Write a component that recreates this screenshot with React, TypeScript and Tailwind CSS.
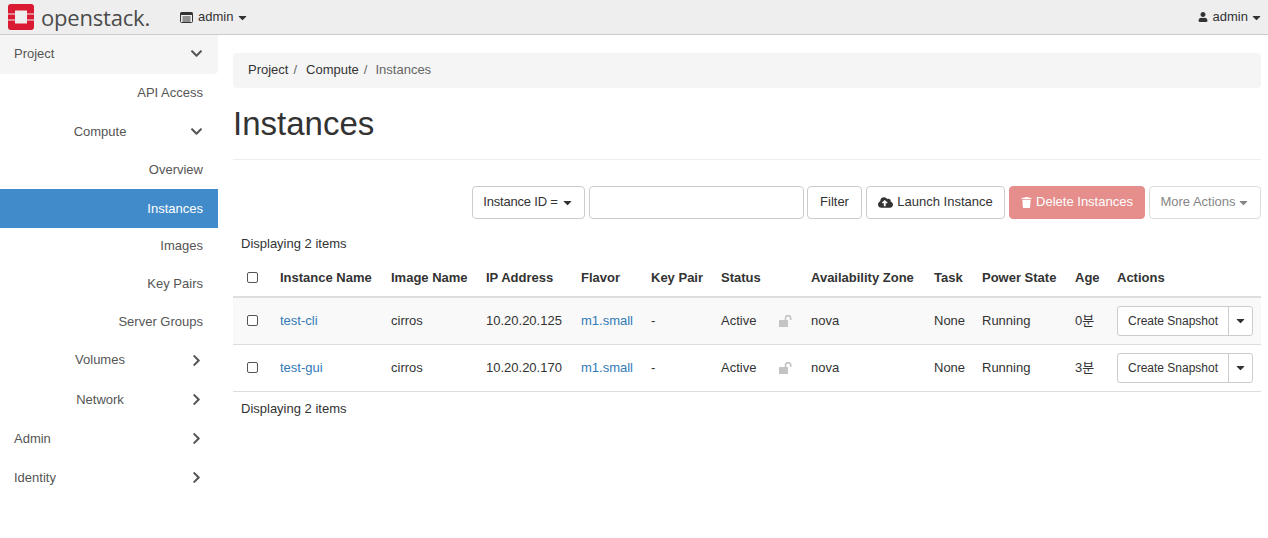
import React from "react";
import {
  FaCaretDown,
  FaChevronDown,
  FaChevronRight,
  FaCloudUploadAlt,
  FaTrash,
  FaUser,
} from "react-icons/fa";

const FONT = "font-['Liberation_Sans','Noto_Sans_CJK_KR',sans-serif]";

const Logo = () => (
  <svg width="26" height="26" viewBox="0 0 26 26" className="shrink-0">
    <path
      fill="#da1a32"
      d="M3 0h20a3 3 0 0 1 3 3v6.5h-7V6.5H7v3H0V3a3 3 0 0 1 3-3zM0 10.5h7v5H0zM19 10.5h7v5h-7zM0 16.5h7v3h12v-3h7V23a3 3 0 0 1-3 3H3a3 3 0 0 1-3-3z"
    />
  </svg>
);

const ListIcon = () => (
  <svg width="13" height="11" viewBox="0 0 13 11" className="shrink-0">
    <rect x="0.5" y="0.5" width="12" height="10" rx="1" fill="none" stroke="#333" />
    <rect x="0.5" y="0.5" width="12" height="2.5" fill="#333" />
    <path d="M2.5 5h8M2.5 7h8M2.5 9h8" stroke="#333" strokeWidth="1" />
  </svg>
);

const UnlockIcon = () => (
  <svg width="14" height="12" viewBox="0 0 14 12" className="shrink-0">
    <rect x="0" y="5" width="9" height="7" rx="0.5" fill="#c4c4c4" />
    <path d="M6.5 5.5V3.2a2.6 2.6 0 0 1 5.2 0V5" fill="none" stroke="#c4c4c4" strokeWidth="1.6" />
  </svg>
);

const SideRow = ({
  h,
  label,
  align = "right",
  open,
  hasArrow,
  active,
  band,
}: {
  h: string;
  label: string;
  align?: "left" | "center" | "right";
  open?: boolean;
  hasArrow?: boolean;
  active?: boolean;
  band?: boolean;
}) => (
  <div
    className={`flex items-center text-[13px] ${h} ${
      active ? "bg-[#428bca] text-white" : "pb-[2px] text-[#555]"
    } ${band ? "bg-[#f5f5f5] rounded-br-[4px]" : ""}`}
  >
    {align === "left" && <span className="pl-[14px] flex-1">{label}</span>}
    {align === "center" && <span className="w-[174px] pl-[26px] text-center">{label}</span>}
    {align === "right" && <span className="flex-1 text-right pr-[15px]">{label}</span>}
    {hasArrow && (
      <span className="ml-auto w-[44px] flex justify-center text-[#555]">
        {open ? <FaChevronDown size={13} /> : <FaChevronRight size={13} />}
      </span>
    )}
  </div>
);

const Sidebar = () => (
  <aside className="w-[218px] shrink-0">
    <SideRow h="h-[39px]" label="Project" align="left" hasArrow open band />
    <SideRow h="h-[39px]" label="API Access" />
    <SideRow h="h-[39px]" label="Compute" align="center" hasArrow open />
    <SideRow h="h-[37px]" label="Overview" />
    <SideRow h="h-[39px]" label="Instances" active />
    <SideRow h="h-[38px]" label="Images" />
    <SideRow h="h-[38px]" label="Key Pairs" />
    <SideRow h="h-[38px]" label="Server Groups" />
    <SideRow h="h-[38px]" label="Volumes" align="center" hasArrow />
    <SideRow h="h-[41px]" label="Network" align="center" hasArrow />
    <SideRow h="h-[37px]" label="Admin" align="left" hasArrow />
    <SideRow h="h-[41px]" label="Identity" align="left" hasArrow />
  </aside>
);

const btn =
  "h-[33px] flex items-center justify-center rounded-[4px] border pb-[1px] text-[13px] whitespace-nowrap";

const Toolbar = () => (
  <div className="mt-[26px] flex justify-end">
    <div className={`${btn} w-[113px] border-[#ccc] text-[#333] gap-[3px] tracking-[-0.2px]`}>
      Instance ID = <FaCaretDown size={13} />
    </div>
    <input className="ml-[4px] h-[33px] w-[215px] rounded-[4px] border border-[#ccc] bg-white" />
    <div className={`${btn} ml-[3px] w-[55px] border-[#ccc] text-[#333]`}>Filter</div>
    <div className={`${btn} ml-[4px] w-[139px] border-[#ccc] text-[#333] gap-[4px]`}>
      <FaCloudUploadAlt size={15} /> Launch Instance
    </div>
    <div className={`${btn} ml-[4px] w-[136px] border-[#e58e8c] bg-[#e58e8c] text-white gap-[4px]`}>
      <FaTrash size={11} /> Delete Instances
    </div>
    <div className={`${btn} ml-[4px] w-[112px] border-[#ddd] text-[#868686] gap-[1px]`}>
      More Actions <FaCaretDown size={13} />
    </div>
  </div>
);

const Check = () => (
  <input
    type="checkbox"
    className="appearance-none block w-[11px] h-[11px] mx-auto rounded-[2px] border border-[#555] bg-white"
  />
);

const HEAD = [
  "Instance Name",
  "Image Name",
  "IP Address",
  "Flavor",
  "Key Pair",
  "Status",
  "Availability Zone",
  "Task",
  "Power State",
  "Age",
  "Actions",
];

const ROWS = [
  { name: "test-cli", ip: "10.20.20.125", age: "0분", striped: true },
  { name: "test-gui", ip: "10.20.20.170", age: "3분", striped: false },
];

const InstanceTable = () => (
  <table className="w-[1028px] table-fixed border-collapse text-[13px] text-[#333]">
    <colgroup>
      <col className="w-[39px]" />
      <col className="w-[111px]" />
      <col className="w-[95px]" />
      <col className="w-[95px]" />
      <col className="w-[70px]" />
      <col className="w-[70px]" />
      <col className="w-[90px]" />
      <col className="w-[123px]" />
      <col className="w-[48px]" />
      <col className="w-[93px]" />
      <col className="w-[42px]" />
      <col className="w-[152px]" />
    </colgroup>
    <thead>
      <tr className="h-[38px] border-b-2 border-[#ddd]">
        <th className="p-0">
          <Check />
        </th>
        {HEAD.map((h) => (
          <th key={h} className="px-[8px] py-0 text-left font-bold whitespace-nowrap">
            {h}
          </th>
        ))}
      </tr>
    </thead>
    <tbody>
      {ROWS.map((r) => (
        <tr key={r.name} className={`h-[47px] border-b border-[#ddd] ${r.striped ? "bg-[#f9f9f9]" : ""}`}>
          <td className="p-0">
            <Check />
          </td>
          <td className="px-[8px] text-[#337ab7]">{r.name}</td>
          <td className="px-[8px]">cirros</td>
          <td className="px-[8px] whitespace-nowrap">{r.ip}</td>
          <td className="px-[8px] text-[#337ab7] whitespace-nowrap">m1.small</td>
          <td className="px-[8px]">-</td>
          <td className="pl-[8px]">
            <div className="flex items-center justify-between pr-[10px]">
              Active
              <UnlockIcon />
            </div>
          </td>
          <td className="px-[8px]">nova</td>
          <td className="px-[8px]">None</td>
          <td className="px-[8px]">Running</td>
          <td className="px-[8px] whitespace-nowrap">{r.age}</td>
          <td className="pl-[8px] pr-[8px]">
            <div className="flex h-[30px] w-[136px] rounded-[3px] border border-[#ccc] bg-white text-[12px]">
              <div className="flex flex-1 items-center justify-center whitespace-nowrap">
                Create Snapshot
              </div>
              <div className="flex w-[24px] items-center justify-center border-l border-[#ccc]">
                <FaCaretDown size={13} />
              </div>
            </div>
          </td>
        </tr>
      ))}
    </tbody>
  </table>
);

export default function App() {
  return (
    <div className={`h-[538px] w-[1268px] overflow-hidden bg-white ${FONT}`}>
      <header className="flex h-[35px] items-center border-b border-[#ccc] bg-[#eeeeee] text-[#333]">
        <div className="ml-[8px] flex w-[172px] items-center">
          <Logo />
          <span className="ml-[7px] text-[22px] leading-none font-medium tracking-[-0.2px] text-[#4b4b4b] font-['Open_Sans',sans-serif]">
            openstack.
          </span>
        </div>
        <div className="flex items-center text-[13px]">
          <ListIcon />
          <span className="ml-[5px]">admin</span>
          <FaCaretDown size={13} className="ml-[3px]" />
        </div>
        <div className="ml-auto mr-[5px] flex items-center text-[13px]">
          <FaUser size={10} />
          <span className="ml-[5px]">admin</span>
          <FaCaretDown size={13} className="ml-[2px]" />
        </div>
      </header>

      <div className="flex">
        <Sidebar />
        <main className="ml-[15px] w-[1028px] pt-[18px]">
          <nav className="flex h-[35px] items-center rounded-[4px] bg-[#f5f5f5] pb-[2px] pl-[15px] text-[13px] text-[#333]">
            <span>Project</span>
            <span className="ml-[5px] text-[#666]">/</span>
            <span className="ml-[9px]">Compute</span>
            <span className="ml-[5px] text-[#666]">/</span>
            <span className="ml-[8px] text-[#666]">Instances</span>
          </nav>
          <h1 className="mt-[16px] h-[55px] border-0 text-[33px] leading-[40px] font-normal text-[#333]">
            Instances
          </h1>
          <div className="border-b border-[#eee]" />
          <Toolbar />
          <p className="mt-[15px] h-[20px] pl-[8px] text-[13px] leading-[20px] text-[#333]">
            Displaying 2 items
          </p>
          <div className="pt-[5px]">
            <InstanceTable />
          </div>
          <p className="mt-[7px] pl-[8px] text-[13px] leading-[20px] text-[#333]">
            Displaying 2 items
          </p>
        </main>
      </div>
    </div>
  );
}
